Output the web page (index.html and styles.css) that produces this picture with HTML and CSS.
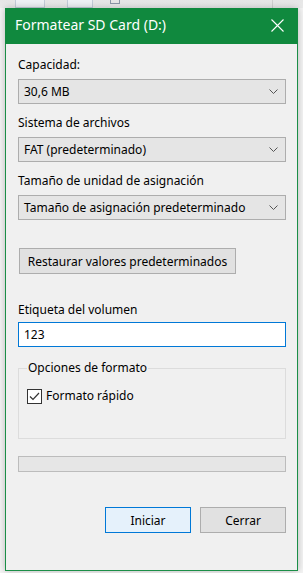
FILE: index.html
```html
<!DOCTYPE html>
<html lang="es">
<head>
  <meta charset="UTF-8" />
  <title>Formatear SD Card (D:)</title>
  <link rel="stylesheet" href="styles.css">
</head>
<body>
  <div class="backdrop">
    <span class="bg-icon bg-list"></span>
    <span class="bg-icon bg-doc"></span>
    <span class="bg-icon bg-dots"></span>
    <span class="bg-line"></span>
  </div>

  <div class="window">
    <div class="titlebar">
      <span class="title">Formatear SD Card (D:)</span>
      <svg class="close" width="13" height="13" viewBox="0 0 13 13">
        <path d="M0.5 0.5 L12.5 12.5 M12.5 0.5 L0.5 12.5" stroke="#fff" stroke-width="1.1" fill="none"/>
      </svg>
    </div>

    <div class="content">
      <div class="label first">Capacidad:</div>
      <div class="combo">
        <span>30,6 MB</span>
        <svg class="chev" width="9" height="5" viewBox="0 0 9 5"><path d="M0.5 0.5 L4.5 4.5 L8.5 0.5" stroke="#555" fill="none"/></svg>
      </div>

      <div class="label">Sistema de archivos</div>
      <div class="combo">
        <span>FAT (predeterminado)</span>
        <svg class="chev" width="9" height="5" viewBox="0 0 9 5"><path d="M0.5 0.5 L4.5 4.5 L8.5 0.5" stroke="#555" fill="none"/></svg>
      </div>

      <div class="label">Tamaño de unidad de asignación</div>
      <div class="combo">
        <span>Tamaño de asignación predeterminado</span>
        <svg class="chev" width="9" height="5" viewBox="0 0 9 5"><path d="M0.5 0.5 L4.5 4.5 L8.5 0.5" stroke="#555" fill="none"/></svg>
      </div>

      <button class="btn restore">Restaurar valores predeterminados</button>

      <div class="label volume">Etiqueta del volumen</div>
      <div class="textbox">123</div>

      <fieldset class="group">
        <legend>Opciones de formato</legend>
        <div class="check-row">
          <span class="checkbox">
            <svg width="13" height="13" viewBox="0 0 13 13"><path d="M2 6.5 L5 9.5 L11 3" stroke="#333" stroke-width="1.2" fill="none"/></svg>
          </span>
          <span>Formato rápido</span>
        </div>
      </fieldset>

      <div class="progress"></div>

      <div class="actions">
        <button class="btn primary">Iniciar</button>
        <button class="btn">Cerrar</button>
      </div>
    </div>
  </div>
</body>
</html>
```

FILE: styles.css
```css
html, body {
  margin: 0;
  padding: 0;
}
body {
  width: 303px;
  height: 573px;
  overflow: hidden;
  position: relative;
  background: #f4f4f4;
  font-family: 'Noto Sans', 'Liberation Sans', sans-serif;
  font-size: 12px;
  line-height: 16px;
  color: #000;
  padding: 8px 5px 0 5px;
  box-sizing: border-box;
}
.backdrop {
  position: absolute;
  left: 0;
  top: 0;
  width: 303px;
  height: 573px;
  background: linear-gradient(to bottom, #e6e6e6 0, #ececec 8px, #f4f4f4 8px);
}
.bg-icon {
  position: absolute;
  top: 0;
  height: 7px;
  border: 1px solid #c3ccd8;
  border-top: none;
  background: #eef1f5;
}
.bg-list { left: 15px; width: 28px; }
.bg-doc { left: 67px; width: 24px; }
.bg-dots { left: 110px; width: 8px; height: 3px; border-color: #8c97a8; background: none; }
.bg-line {
  position: absolute;
  left: 272px;
  top: 0;
  width: 1px;
  height: 8px;
  background: #d0d0d0;
}

.window {
  position: relative;
  width: 293px;
  height: 563px;
  box-sizing: border-box;
  border: 1px solid #1b8e47;
  background: #f0f0f0;
  box-shadow: 0 0 7px rgba(0, 0, 0, 0.25);
  display: flex;
  flex-direction: column;
}
.titlebar {
  height: 36px;
  background: #10893e;
  display: flex;
  align-items: center;
  justify-content: space-between;
  padding: 0 14px 0 10px;
  margin: -1px -1px 0 -1px;
}
.title {
  color: #fff;
  font-size: 14px;
  margin-top: -2px;
}
.close {
  margin-top: -1px;
}

.content {
  padding: 0 11px 0 12px;
  display: flex;
  flex-direction: column;
}
.label {
  margin-top: 11px;
  margin-bottom: 6px;
}
.label.first { margin-top: 13px; }
.label.volume { margin-top: 28px; margin-bottom: 4px; }

.combo {
  height: 25px;
  box-sizing: border-box;
  border: 1px solid #adadad;
  background: #e5e5e5;
  display: flex;
  align-items: center;
  justify-content: space-between;
  padding: 0 7px 0 5px;
}
.chev { display: block; }

.btn {
  font-family: inherit;
  font-size: 12px;
  color: #000;
  background: #e1e1e1;
  border: 1px solid #adadad;
  border-radius: 0;
  height: 26px;
  box-sizing: border-box;
  padding: 0 7px;
}
.restore {
  align-self: flex-start;
  margin-top: 28px;
  margin-left: 1px;
  width: 217px;
}

.textbox {
  height: 25px;
  box-sizing: border-box;
  border: 1px solid #0078d7;
  background: #fff;
  padding: 0 5px;
  display: flex;
  align-items: center;
}

.group {
  margin: 13px 0 0 0;
  padding: 0 8px 0 8px;
  border: 1px solid #dcdcdc;
  height: 79px;
  box-sizing: border-box;
}
.group legend {
  padding: 0 1px;
}
.check-row {
  display: flex;
  align-items: center;
  gap: 4px;
  margin-top: 12px;
}
.checkbox {
  width: 15px;
  height: 15px;
  box-sizing: border-box;
  border: 1px solid #333;
  background: #fff;
  display: flex;
  align-items: center;
  justify-content: center;
}
.checkbox svg { display: block; }

.progress {
  margin-top: 17px;
  height: 16px;
  box-sizing: border-box;
  border: 1px solid #bcbcbc;
  background: #e6e6e6;
}

.actions {
  margin-top: 35px;
  display: flex;
  justify-content: flex-end;
  gap: 9px;
}
.actions .btn {
  width: 86px;
}
.btn.primary {
  border-color: #0078d7;
  background: #e5f1fb;
}
```
